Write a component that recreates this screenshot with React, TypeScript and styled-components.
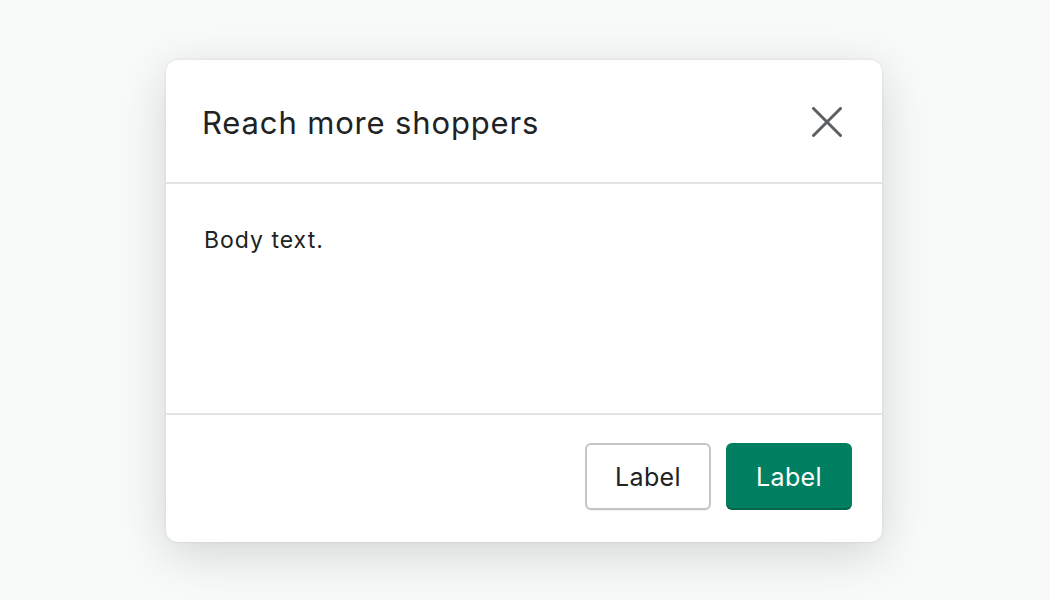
import React from "react";
import styled, { createGlobalStyle } from "styled-components";

const GlobalStyle = createGlobalStyle`
  html, body {
    margin: 0;
    padding: 0;
    background: #f8f9f9;
    font-family: Inter, "Noto Sans", "Liberation Sans", sans-serif;
  }
`;

const Page = styled.div`
  width: 1050px;
  height: 600px;
  display: flex;
  align-items: center;
  justify-content: center;
  padding: 2px 2px 0 0;
  box-sizing: border-box;
`;

const Modal = styled.div`
  width: 716px;
  background: #ffffff;
  border-radius: 12px;
  box-shadow: 0 0 3px rgba(0, 0, 0, 0.1), 0 12px 48px rgba(0, 0, 0, 0.15);
  display: flex;
  flex-direction: column;
  overflow: hidden;
`;

const Header = styled.div`
  height: 124px;
  box-sizing: border-box;
  display: flex;
  align-items: center;
  justify-content: space-between;
  padding: 2px 38px 0 36px;
  border-bottom: 2px solid #e3e4e5;
`;

const Title = styled.h2`
  margin: 0;
  font-size: 31px;
  font-weight: 400;
  color: #202223;
  letter-spacing: 0.85px;
`;

const CloseButton = styled.button`
  width: 34px;
  height: 34px;
  border: none;
  background: transparent;
  padding: 0;
  display: flex;
  align-items: center;
  justify-content: center;
  cursor: pointer;
`;

const Body = styled.div`
  height: 231px;
  box-sizing: border-box;
  padding: 42px 38px;
  font-size: 23px;
  color: #202223;
  letter-spacing: 1px;
  border-bottom: 2px solid #e3e4e5;
`;

const Footer = styled.div`
  height: 127px;
  box-sizing: border-box;
  display: flex;
  align-items: center;
  justify-content: flex-end;
  gap: 15px;
  padding: 0 30px 4px;
`;

const Button = styled.button<{ $primary?: boolean }>`
  height: 67px;
  width: 126px;
  padding: 0;
  box-sizing: border-box;
  border-radius: 6px;
  font-family: inherit;
  font-size: 25px;
  font-weight: 400;
  cursor: pointer;
  letter-spacing: 0.4px;
  border: ${(p) => (p.$primary ? "none" : "2px solid #c2c5c8")};
  background: ${(p) => (p.$primary ? "#008060" : "#ffffff")};
  color: ${(p) => (p.$primary ? "#ffffff" : "#202223")};
  box-shadow: ${(p) =>
    p.$primary ? "inset 0 -2px 0 rgba(0, 0, 0, 0.2)" : "0 1px 0 rgba(0, 0, 0, 0.05)"};
`;

const CloseIcon = () => (
  <svg width="30" height="30" viewBox="0 0 30 30" fill="none">
    <path
      d="M1.5 1.5 L28.5 28.5 M28.5 1.5 L1.5 28.5"
      stroke="#5c5f62"
      strokeWidth="3"
      strokeLinecap="round"
    />
  </svg>
);

const App: React.FC = () => {
  return (
    <>
      <GlobalStyle />
      <Page>
        <Modal>
          <Header>
            <Title>Reach more shoppers</Title>
            <CloseButton aria-label="Close">
              <CloseIcon />
            </CloseButton>
          </Header>
          <Body>Body text.</Body>
          <Footer>
            <Button>Label</Button>
            <Button $primary>Label</Button>
          </Footer>
        </Modal>
      </Page>
    </>
  );
};

export default App;
